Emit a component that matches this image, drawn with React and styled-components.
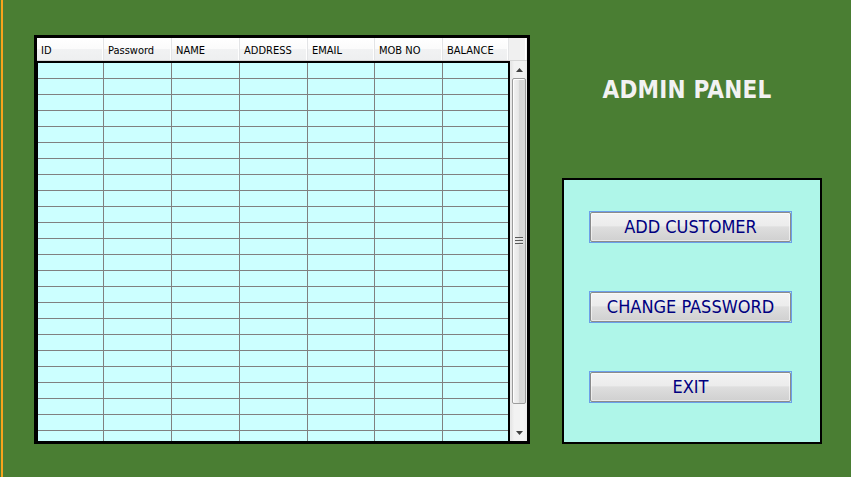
import React from "react";
import styled, { createGlobalStyle } from "styled-components";

const GlobalStyle = createGlobalStyle`
  html, body { margin: 0; padding: 0; background: #4a7e33; }
  * { box-sizing: border-box; }
`;

const UI_FONT = `"DejaVu Sans Condensed", "DejaVu Sans", "Liberation Sans", sans-serif`;

const Frame = styled.div`
  width: 851px;
  height: 477px;
  background: #4a7e33;
  display: flex;
  align-items: flex-start;
  padding-top: 34px;
  overflow: hidden;
  font-family: ${UI_FONT};
`;

const OrangeEdge = styled.div`
  align-self: stretch;
  width: 2px;
  margin: -34px 0 0 1px;
  background: #f7a41c;
`;

const TableBox = styled.div`
  margin: 1px 0 0 31px;
  width: 496px;
  height: 409px;
  border: 3px solid #000;
  display: grid;
  grid-template-rows: 23px 1fr;
  grid-template-columns: 1fr 17px;
  background: #f0f0f0;
  overflow: hidden;
`;

const Header = styled.div`
  grid-column: 1 / 3;
  display: grid;
  grid-template-columns: 67px 68px 68px 68px 67px 68px 66px 1fr;
  background: linear-gradient(#ffffff 0%, #fbfbfb 50%, #f1f2f3 51%, #eeeff0 100%);
  border-bottom: 1px solid #d5d5d5;
`;

const HeaderCell = styled.div`
  font-size: 11px;
  color: #000;
  padding: 3px 0 0 4px;
  display: flex;
  align-items: center;
  border-right: 1px solid ${(p) => (p.$filler ? "transparent" : "#e3e4e6")};
  box-shadow: inset -1px 0 0 #ffffff;
  background: ${(p) => (p.$filler ? "#f0f0f0" : "transparent")};
  white-space: nowrap;
`;

const Viewport = styled.div`
  overflow: hidden;
  background: #ccffff;
`;

const Grid = styled.div`
  border-top: 2px solid #000;
  border-left: 1px solid #000;
  border-right: 2px solid #000;
  background: #ccffff;
`;

const Row = styled.div`
  display: grid;
  grid-template-columns: 66px 68px 68px 68px 67px 68px 1fr;
  height: 16px;
  border-bottom: 1px solid #808080;
`;

const Cell = styled.div`
  border-right: 1px solid ${(p) => (p.$last ? "transparent" : "#808080")};
`;

const ScrollBar = styled.div`
  display: flex;
  flex-direction: column;
  background: linear-gradient(90deg, #e6e6e6 0%, #f2f2f2 20%, #f2f2f2 80%, #ececec 100%);
  border-left: 1px solid #e8e8e8;
`;

const ArrowButton = styled.div`
  height: 17px;
  display: flex;
  align-items: center;
  justify-content: center;
  flex-shrink: 0;
`;

const Track = styled.div`
  flex: 1;
  padding: 0 1px;
`;

const Thumb = styled.div`
  height: 326px;
  border: 1px solid #9c9c9c;
  border-radius: 2px;
  background: linear-gradient(90deg, #f3f3f3 0%, #e8e8e8 45%, #d6d6d6 55%, #d9d9d9 100%);
  box-shadow: inset 1px 1px 0 #ffffff;
  display: flex;
  align-items: center;
  justify-content: center;
`;

const RightCol = styled.div`
  margin-left: 32px;
  width: 260px;
  display: flex;
  flex-direction: column;
`;

const Title = styled.h1`
  margin: 0;
  height: 144px;
  padding: 42px 10px 0 0;
  text-align: center;
  font-family: ${UI_FONT};
  font-weight: bold;
  font-size: 24px;
  line-height: 28px;
  color: #f2f2f2;
  letter-spacing: 0.2px;
`;

const Panel = styled.div`
  width: 260px;
  height: 266px;
  border: 2px solid #000;
  background: #aff6e9;
  display: flex;
  flex-direction: column;
  align-items: flex-start;
  padding: 31px 0 0 25px;
  gap: 47px;
`;

const Button = styled.button`
  width: 203px;
  height: 32px;
  padding: 0;
  border: 1px solid #6c9fea;
  background: #aff6e9;
  cursor: pointer;
  font-family: ${UI_FONT};
  margin-top: ${(p) => p.$shift || 0}px;
`;

const Face = styled.span`
  display: flex;
  align-items: center;
  justify-content: center;
  height: 100%;
  border: 1px solid #8b8b8b;
  border-radius: 2px;
  background: linear-gradient(#f2f2f2 0%, #ececec 45%, #dedede 50%, #d0d0d0 100%);
  box-shadow: inset 0 0 0 1px rgba(255, 255, 255, 0.55);
  color: #000080;
  font-size: 18px;
  line-height: 1;
`;

const columns = ["ID", "Password", "NAME", "ADDRESS", "EMAIL", "MOB NO", "BALANCE"];
const rows = Array.from({ length: 25 });

const UpArrow = () => (
  <svg width="7" height="4" viewBox="0 0 7 4">
    <polygon points="3.5,0 7,4 0,4" fill="#404040" />
  </svg>
);
const DownArrow = () => (
  <svg width="7" height="4" viewBox="0 0 7 4">
    <polygon points="0,0 7,0 3.5,4" fill="#404040" />
  </svg>
);
const Grip = () => (
  <svg width="8" height="8" viewBox="0 0 8 8">
    <rect x="0" y="0" width="8" height="1" fill="#5a5a5a" />
    <rect x="0" y="3" width="8" height="1" fill="#5a5a5a" />
    <rect x="0" y="6" width="8" height="1" fill="#5a5a5a" />
    <rect x="0" y="1" width="8" height="1" fill="#e8e8e8" />
    <rect x="0" y="4" width="8" height="1" fill="#e8e8e8" />
    <rect x="0" y="7" width="8" height="1" fill="#e8e8e8" />
  </svg>
);

export default function App() {
  return (
    <>
      <GlobalStyle />
      <Frame>
        <OrangeEdge />
        <TableBox>
          <Header>
            {columns.map((c) => (
              <HeaderCell key={c}>{c}</HeaderCell>
            ))}
            <HeaderCell $filler />
          </Header>
          <Viewport>
            <Grid>
              {rows.map((_, i) => (
                <Row key={i}>
                  {columns.map((c, j) => (
                    <Cell key={c} $last={j === columns.length - 1} />
                  ))}
                </Row>
              ))}
            </Grid>
          </Viewport>
          <ScrollBar>
            <ArrowButton>
              <UpArrow />
            </ArrowButton>
            <Track>
              <Thumb>
                <Grip />
              </Thumb>
            </Track>
            <ArrowButton>
              <DownArrow />
            </ArrowButton>
          </ScrollBar>
        </TableBox>
        <RightCol>
          <Title>ADMIN PANEL</Title>
          <Panel>
            <Button>
              <Face>ADD CUSTOMER</Face>
            </Button>
            <Button $shift={1}>
              <Face>CHANGE PASSWORD</Face>
            </Button>
            <Button $shift={1}>
              <Face>EXIT</Face>
            </Button>
          </Panel>
        </RightCol>
      </Frame>
    </>
  );
}
